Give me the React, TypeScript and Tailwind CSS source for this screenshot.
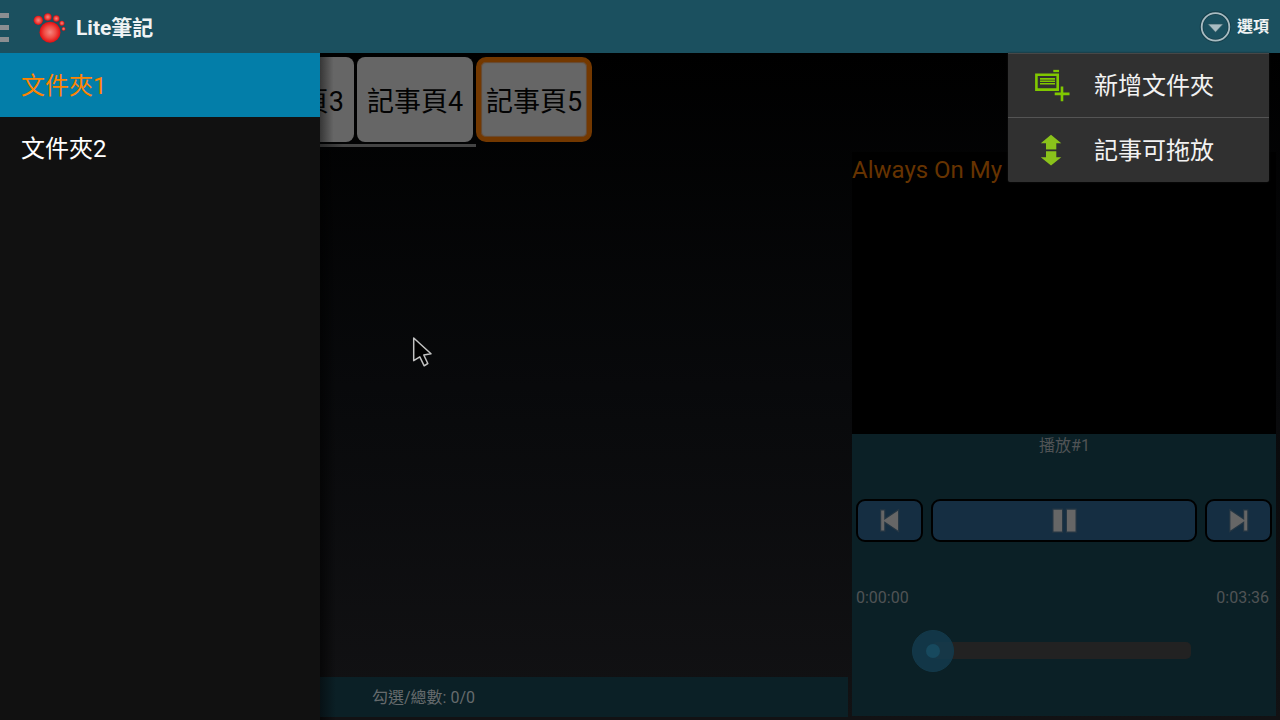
import React from "react";

const pawDots = [
  { x: 6.3, y: 9.3, r: 4.6 },
  { x: 15.8, y: 6, r: 3.8 },
  { x: 24.3, y: 7.5, r: 3.2 },
  { x: 29.9, y: 12.2, r: 2.5 },
  { x: 31.6, y: 17.9, r: 1.9 },
  { x: 18, y: 21.2, r: 10.5 },
];

function Paw() {
  return (
    <svg className="ml-[23px] h-8 w-[34px] shrink-0" viewBox="0 0 34 32">
      <defs>
        <radialGradient id="paw">
          <stop offset="0" stopColor="#f48680" />
          <stop offset="0.55" stopColor="#f04c44" />
          <stop offset="1" stopColor="#e20c10" />
        </radialGradient>
      </defs>
      {pawDots.map((d) => (
        <circle key={d.x} cx={d.x} cy={d.y} r={d.r} fill="url(#paw)" />
      ))}
    </svg>
  );
}

function Header() {
  return (
    <header className="flex h-[53px] shrink-0 items-center bg-[#1b505f]">
      <div className="flex w-[9px] flex-col gap-[7px] pt-px">
        <i className="h-[5px] bg-[#8b8e91]" />
        <i className="h-[5px] bg-[#8b8e91]" />
        <i className="h-[5px] bg-[#8b8e91]" />
      </div>
      <Paw />
      <h1 className="ml-2.5 pt-0.5 text-[21px] leading-6 font-bold text-[#f0f3f4]">Lite筆記</h1>
      <div className="mr-[11px] ml-auto flex items-center">
        <svg className="mr-1.5 h-8 w-8" viewBox="0 0 32 32">
          <circle cx="16.5" cy="15.9" r="14" fill="none" stroke="#163f4b" strokeWidth="3.6" />
          <circle cx="16.5" cy="15.9" r="13.8" fill="none" stroke="#a9bcc2" strokeWidth="1.8" />
          <path d="M8.7 13H24.3L16.5 21.3Z" fill="#a9bcc2" stroke="#26515d" strokeWidth="0.7" />
        </svg>
        <span className="text-base leading-6 font-bold text-[#f0f3f4]">選項</span>
      </div>
    </header>
  );
}

function Sidebar() {
  return (
    <aside className="w-80 shrink-0 bg-[#111111] text-2xl">
      <div className="h-16 bg-[#037ea9] pl-[21px] leading-[66px] text-[#ff8400]">文件夾1</div>
      <div className="h-[63px] pl-[21px] leading-[64px] text-white">文件夾2</div>
    </aside>
  );
}

function Tabs() {
  return (
    <div className="h-[97px] pt-1">
      <div className="flex h-[85px] gap-[3px] text-[27px] leading-[91px] text-[#030303]">
        <div className="flex w-[34px] justify-end overflow-hidden rounded-r-lg bg-[#666666] bg-linear-to-r/srgb from-[#373737] to-[#666666] to-40% pr-2.5 whitespace-nowrap">
          <span>記事頁3</span>
        </div>
        <div className="w-[116px] rounded-lg bg-[#666666] pl-2.5">記事頁4</div>
        <div className="w-[116px] rounded-[10px] border-[5px] border-[#733800] bg-[#666666] pl-[5px] leading-[81px] shadow-[inset_0_0_1px_1px_#69482c]">
          記事頁5
        </div>
      </div>
      <div className="mt-0.5 h-[3px] w-[156px] bg-[#444444] bg-linear-to-r/srgb from-[#2a2a2a] to-[#444444] to-15%" />
    </div>
  );
}

function PlayerButton({ className, children }: { className: string; children: React.ReactNode }) {
  return (
    <button
      className={`flex h-[43px] items-center justify-center rounded-[9px] border-2 border-black bg-[#152e42] ${className}`}
    >
      <svg className="h-7 w-7" viewBox="0 0 28 28" fill="#666666" stroke="#263744" strokeWidth="2.4" paintOrder="stroke">
        {children}
      </svg>
    </button>
  );
}

function Player() {
  return (
    <section className="mr-1 mb-1 flex w-[424px] shrink-0 flex-col">
      <div className="h-[282px] bg-black text-2xl leading-9 text-[#663300]">Always On My</div>
      <div className="flex-1 bg-[#0b2026] text-[#505355]">
        <div className="h-[65px] pl-px text-center text-base leading-6">播放#1</div>
        <div className="flex gap-2 px-1">
          <PlayerButton className="w-[67px]">
            <path d="M5.2 3.5H8.2V13L22 3.8V23.5L8.2 14.3V23.5H5.2Z" />
          </PlayerButton>
          <PlayerButton className="flex-1">
            <path d="M3.5 2.8H12V24.5H3.5ZM17 2.8H25.5V24.5H17Z" />
          </PlayerButton>
          <PlayerButton className="w-[67px]">
            <path d="M22.2 3.5H19.2V13L5.4 3.8V23.5L19.2 14.3V23.5H22.2Z" />
          </PlayerButton>
        </div>
        <div className="mt-11 flex justify-between pr-[7px] pl-1 text-base leading-6">
          <span>0:00:00</span>
          <span>0:03:36</span>
        </div>
        <div className="mt-[19px] ml-[59px] flex h-[43px] w-[280px] items-center pl-px">
          <div className="z-10 flex h-[42px] w-[42px] shrink-0 items-center justify-center rounded-full border border-[#13394a] bg-[#143b4d]/85">
            <div className="h-3.5 w-3.5 rounded-full bg-[#17495e]" />
          </div>
          <div className="-ml-[22px] h-[17px] flex-1 rounded-[5px] bg-[#222222]" />
        </div>
      </div>
    </section>
  );
}

function OptionsMenu() {
  return (
    <div className="absolute top-[53px] left-[1008px] h-[129px] w-[261px] rounded-b-[2px] border-t border-[#474747] bg-[#303030] text-2xl text-[#f2f2f2] shadow-[0_0_2px_#181818]">
      <div className="flex h-16 items-center border-b border-[#545454] pl-[26px]">
        <svg className="h-9 w-9" viewBox="0 0 36 36" fill="none" stroke="#80c800">
          <path d="M2.4 6.7H23.7V21.6H2.4Z" strokeWidth="2.6" />
          <path d="M6 10.9H21M6 13.3H21M6 15.7H21" strokeWidth="1.6" />
          <path d="M19.3 3H25" strokeWidth="2.3" />
          <path d="M28 18.5V33.3M20.7 25.9H35.5" strokeWidth="2.6" />
        </svg>
        <span className="ml-6 leading-8">新增文件夾</span>
      </div>
      <div className="flex h-16 items-center pl-[26px]">
        <svg className="h-9 w-9" viewBox="0 0 36 36" fill="#8ac21b">
          <path d="M17 2.8 27.3 11.2H22.3V17H12V11.2H6.8Z" />
          <path d="M12 19.3H22.3V25.2H27.3L17 33.4 6.8 25.2H12Z" />
          <path d="M12 17H22.3V18H12Z" fill="#557224" />
        </svg>
        <span className="ml-6 pt-0.5 leading-8">記事可拖放</span>
      </div>
    </div>
  );
}

export default function App() {
  return (
    <div className="relative flex h-[720px] w-[1280px] flex-col overflow-hidden bg-black font-[Roboto,'Noto_Sans_CJK_TC',sans-serif]">
      <Header />
      <div className="flex min-h-0 flex-1">
        <Sidebar />
        <main className="flex min-w-0 flex-1 flex-col bg-linear-to-b/srgb from-black via-[#08090b] to-[#121214]">
          <Tabs />
          <div className="flex min-h-0 flex-1 gap-1">
            <div className="flex w-[528px] shrink-0 flex-col justify-end bg-linear-to-r/srgb from-black/60 to-transparent to-3% pb-[3px]">
              <footer className="h-10 bg-[#0b2026] bg-linear-to-r/srgb from-[#071115] to-[#0b2026] to-3% pl-[52px] text-base leading-[42px] text-[#666b6d]">
                勾選/總數: 0/0
              </footer>
            </div>
            <div className="flex pt-0.5">
              <Player />
            </div>
          </div>
        </main>
      </div>
      <OptionsMenu />
      <svg className="absolute top-[335px] left-[411px] h-[34px] w-6" viewBox="0 0 24 34">
        <path
          d="M2.7 3 20 18.8 12.8 20 16.8 28.5 13.2 30.8 8.8 21.9 2.7 25.7Z"
          fill="#000000"
          stroke="#c2c2c2"
          strokeWidth="1.5"
          strokeLinejoin="round"
        />
      </svg>
    </div>
  );
}
